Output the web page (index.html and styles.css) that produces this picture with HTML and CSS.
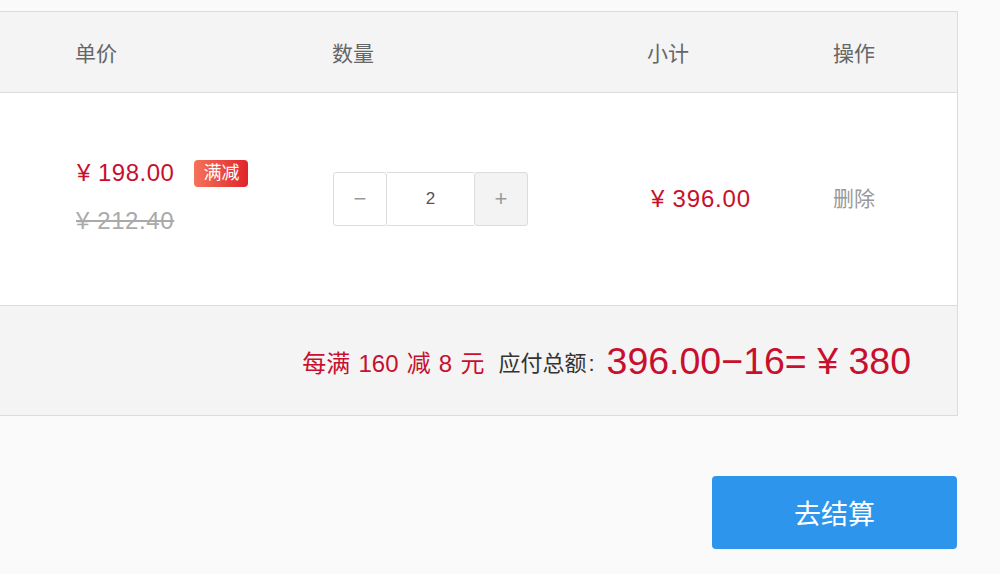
FILE: index.html
```html
<!DOCTYPE html>
<html lang="zh">
<head>
<meta charset="utf-8">
<title>购物车</title>
<link rel="stylesheet" href="styles.css">
</head>
<body>
<div class="cart">
  <div class="table">
    <div class="row head">
      <div class="cell c-price">单价</div>
      <div class="cell c-qty">数量</div>
      <div class="cell c-sub">小计</div>
      <div class="cell c-op">操作</div>
    </div>
    <div class="row item">
      <div class="cell c-price">
        <div class="price-line">
          <span class="price">¥ 198.00</span>
          <span class="badge">满减</span>
        </div>
        <div class="old-price">¥ 212.40</div>
      </div>
      <div class="cell c-qty">
        <div class="stepper">
          <button class="step minus">−</button>
          <div class="qty-input">2</div>
          <button class="step plus">+</button>
        </div>
      </div>
      <div class="cell c-sub"><span class="subtotal">¥ 396.00</span></div>
      <div class="cell c-op"><span class="delete">删除</span></div>
    </div>
    <div class="summary">
      <span class="promo">每满 160 减 8 元</span>
      <span class="label">应付总额<span class="colon">:</span></span>
      <span class="total">396.00−16= ¥ 380</span>
    </div>
  </div>
  <div class="actions">
    <button class="checkout">去结算</button>
  </div>
</div>
</body>
</html>
```

FILE: styles.css
```css
* { box-sizing: border-box; }
html, body {
  margin: 0;
  background: #fafafa;
  font-family: "Liberation Sans", "Noto Sans CJK SC", sans-serif;
}
.cart {
  width: 958px;
  padding-top: 11px;
}
.table {
  border-top: 1px solid #dcdcdc;
  border-right: 1px solid #dcdcdc;
  border-bottom: 1px solid #dcdcdc;
}
.row {
  display: grid;
  grid-template-columns: 333px 314px 186px 1fr;
  align-items: center;
}
.head {
  height: 81px;
  background: #f4f4f4;
  border-bottom: 1px solid #dcdcdc;
  color: #666;
  font-size: 21px;
}
.head .c-price { padding-left: 75px; }
.head .c-qty { margin-left: -1px; }
.item {
  height: 213px;
  background: #fff;
  border-bottom: 1px solid #dcdcdc;
}
.item .c-price {
  padding-left: 77px;
  padding-bottom: 4px;
}
.price-line {
  display: flex;
  align-items: center;
  gap: 20px;
}
.price {
  color: #c8102e;
  font-size: 24px;
  letter-spacing: 0.5px;
}
.badge {
  display: inline-block;
  width: 54px;
  height: 27px;
  line-height: 27px;
  text-align: center;
  color: #fff;
  font-size: 18px;
  border-radius: 4px;
  background: linear-gradient(90deg, #f5735a, #e0242c);
}
.old-price {
  margin-top: 20px;
  margin-left: -1px;
  color: #aaa;
  font-size: 24px;
  letter-spacing: 0.6px;
  text-decoration: line-through;
}
.stepper {
  display: flex;
  height: 54px;
  width: 195px;
}
.step {
  width: 54px;
  height: 54px;
  border: 1px solid #dcdcdc;
  border-radius: 3px;
  background: #fff;
  color: #999;
  font-size: 22px;
  font-family: "Liberation Sans", sans-serif;
  padding: 0;
}
.step.plus { background: #f3f3f3; }
.qty-input {
  width: 87px;
  height: 54px;
  border: 1px solid #dcdcdc;
  border-left: 0;
  border-right: 0;
  display: flex;
  align-items: center;
  justify-content: center;
  color: #555;
  font-size: 17px;
  background: #fff;
}
.item .c-sub { padding-left: 4px; }
.subtotal {
  color: #c8102e;
  font-size: 24px;
  letter-spacing: 0.8px;
}
.delete {
  color: #999;
  font-size: 21px;
  position: relative;
  top: -2px;
}
.summary {
  height: 109px;
  background: #f4f4f4;
  display: flex;
  align-items: center;
  justify-content: flex-end;
  padding-right: 46px;
  padding-top: 1px;
}
.promo {
  color: #c8102e;
  font-size: 24px;
  word-spacing: 1.5px;
}
.label {
  margin-left: 14px;
  color: #333;
  font-size: 22px;
}
.colon {
  margin-left: 2px;
}
.total {
  margin-left: 12px;
  color: #c8102e;
  font-size: 37.5px;
}
.actions {
  display: flex;
  justify-content: flex-end;
  padding-top: 60px;
  padding-right: 1px;
}
.checkout {
  width: 245px;
  height: 73px;
  border: 0;
  border-radius: 4px;
  background: #2d96ec;
  color: #fff;
  font-size: 27px;
  font-family: "Noto Sans CJK SC", sans-serif;
}
```
